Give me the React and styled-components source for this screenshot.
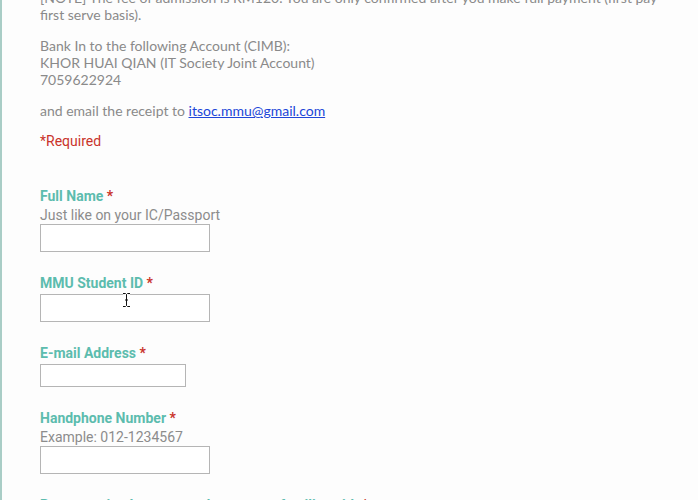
import React from "react";
import styled, { createGlobalStyle } from "styled-components";

const GlobalStyle = createGlobalStyle`
  html, body {
    margin: 0;
    padding: 0;
    background: #fdfdfd;
    overflow: hidden;
  }
`;

const Page = styled.div`
  position: relative;
  display: flow-root;
  min-height: 500px;
  border-left: 2px solid #a9cdc6;
  padding-left: 38px;
  box-sizing: border-box;
`;

const Content = styled.div`
  margin-top: -11px;
  width: 622px;
`;

const Para = styled.p`
  margin: 0 0 14px;
  font-family: Lato, "Liberation Sans", sans-serif;
  font-size: 14px;
  line-height: 17px;
  color: #8a8a8a;
`;

const Link = styled.a`
  color: #2046d8;
  text-decoration: underline;
`;

const Required = styled.p`
  margin: 0;
  font-family: Roboto, "Liberation Sans", sans-serif;
  font-size: 14px;
  line-height: 17px;
  color: #c9332a;
`;

const Form = styled.div`
  margin-top: 38px;
  display: flex;
  flex-direction: column;
  gap: 23px;
`;

const Field = styled.div`
  display: flex;
  flex-direction: column;
  align-items: flex-start;
`;

const Label = styled.div`
  font-family: Roboto, "Liberation Sans", sans-serif;
  font-weight: 700;
  font-size: 14px;
  line-height: 16px;
  color: #5cbcae;
  margin-bottom: 3px;
`;

const Star = styled.span`
  color: #c9332a;
`;

const Help = styled.div`
  font-family: Roboto, "Liberation Sans", sans-serif;
  font-size: 14px;
  line-height: 17px;
  color: #8c8c8c;
`;

const Input = styled.input`
  box-sizing: border-box;
  width: ${(p) => p.$w}px;
  height: ${(p) => p.$h}px;
  margin: 0;
  border: 1px solid #b5b5b5;
  border-radius: 0;
  background: #fff;
  padding: 2px 4px;
  font-family: Roboto, sans-serif;
  font-size: 14px;
  outline: none;
`;

const Cursor = styled.svg`
  position: absolute;
  left: 120px;
  top: 292px;
  width: 9px;
  height: 16px;
  pointer-events: none;
`;

const fields = [
  { label: "Full Name", help: "Just like on your IC/Passport", w: 170, h: 28 },
  { label: "MMU Student ID", w: 170, h: 28 },
  { label: "E-mail Address", w: 146, h: 23 },
  { label: "Handphone Number", help: "Example: 012-1234567", w: 170, h: 28 },
  { label: "Programming Languages that you are familiar with", w: 170, h: 28 },
];

export default function App() {
  return (
    <>
      <GlobalStyle />
      <Page>
        <Content>
          <Para>
            [NOTE] The fee of admission is RM120. You are only confirmed after
            you make full payment (first pay first serve basis).
          </Para>
          <Para>
            Bank In to the following Account (CIMB):
            <br />
            KHOR HUAI QIAN (IT Society Joint Account)
            <br />
            7059622924
          </Para>
          <Para>
            and email the receipt to{" "}
            <Link href="mailto:itsoc.mmu@gmail.com">itsoc.mmu@gmail.com</Link>
          </Para>
          <Required>*Required</Required>
          <Form>
            {fields.map((f) => (
              <Field key={f.label}>
                <Label>
                  {f.label} <Star>*</Star>
                </Label>
                {f.help && <Help>{f.help}</Help>}
                <Input type="text" $w={f.w} $h={f.h} />
              </Field>
            ))}
          </Form>
        </Content>
        <Cursor viewBox="0 0 9 16">
          <path
            d="M1 1.5h2.5L4.5 2.5L5.5 1.5H8M4.5 2.5V13.5M1 14.5h2.5L4.5 13.5L5.5 14.5H8M3 8h3"
            fill="none"
            stroke="#fff"
            strokeWidth="2.6"
          />
          <path
            d="M1 1.5h2.5L4.5 2.5L5.5 1.5H8M4.5 2.5V13.5M1 14.5h2.5L4.5 13.5L5.5 14.5H8M3 8h3"
            fill="none"
            stroke="#111"
            strokeWidth="1"
          />
        </Cursor>
      </Page>
    </>
  );
}
